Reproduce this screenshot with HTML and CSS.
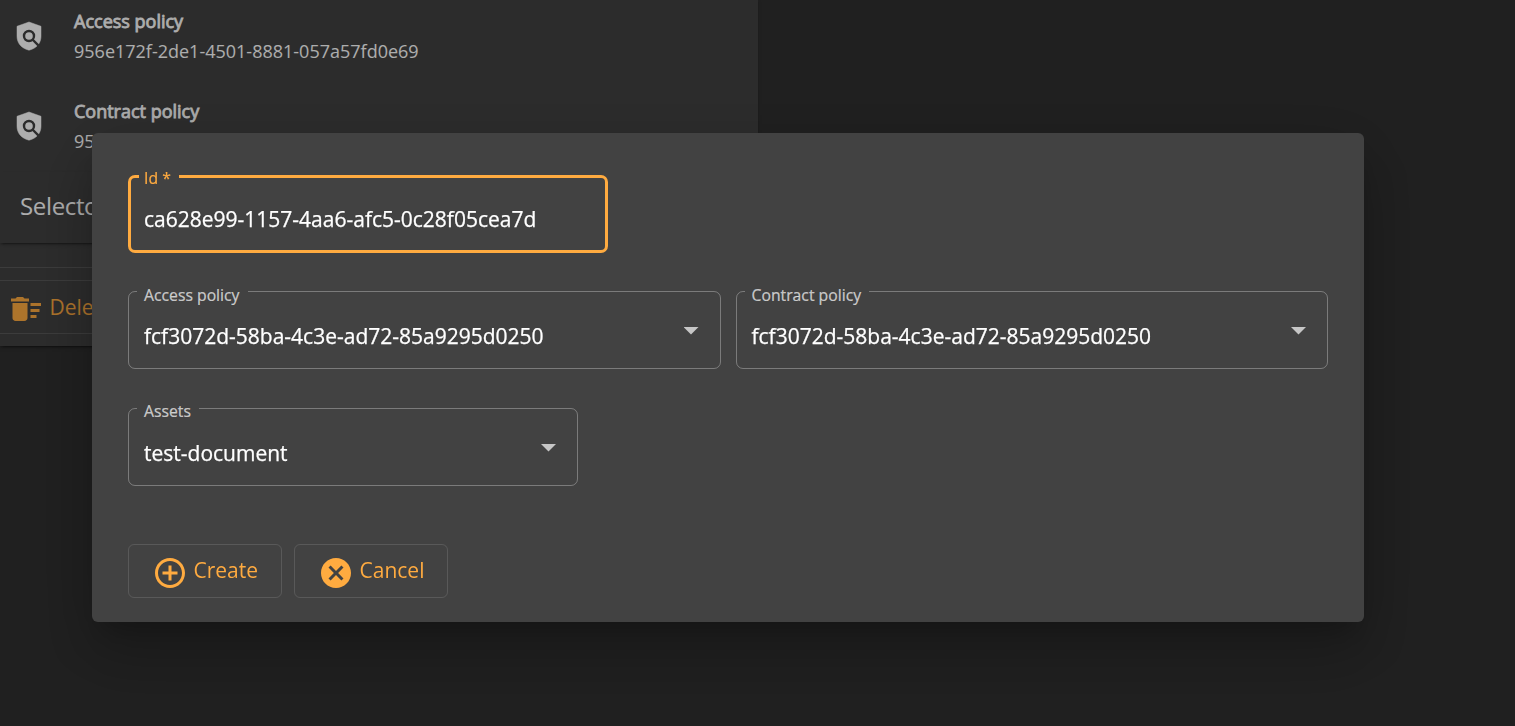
FILE: index.html
```html
<!DOCTYPE html>
<html lang="en">
<head>
<meta charset="utf-8">
<title>Create contract definition</title>
<link rel="stylesheet" href="styles.css">
</head>
<body>
<main class="page">
  <section class="card">
    <div class="item">
      <svg class="item-icon" viewBox="0 0 32 32"><path class="shield" d="M16 2L28 6.300V16C28 22.500 24.500 28 16 30.200C7.500 28 4 22.500 4 16V6.300z"/><circle class="lens" cx="16" cy="16" r="5"/><path class="lens" d="M19.500 19.500L26.300 26.300"/></svg>
      <div><div class="item-title">Access policy</div><div class="item-text">956e172f-2de1-4501-8881-057a57fd0e69</div></div>
    </div>
    <div class="item">
      <svg class="item-icon" viewBox="0 0 32 32"><path class="shield" d="M16 2L28 6.300V16C28 22.500 24.500 28 16 30.200C7.500 28 4 22.500 4 16V6.300z"/><circle class="lens" cx="16" cy="16" r="5"/><path class="lens" d="M19.500 19.500L26.300 26.300"/></svg>
      <div><div class="item-title">Contract policy</div><div class="item-text">95</div></div>
    </div>
    <div class="selector">Selecto</div>
    <div class="spacer"></div>
    <div class="delete">
      <svg class="icon" viewBox="0 0 24 24"><path d="M15 16h4v2h-4zm0-8h7v2h-7zm0 4h6v2h-6zM3 18c0 1.1.9 2 2 2h6c1.1 0 2-.9 2-2V8H3v10zM14 5h-3l-1-1H6L5 5H2v2h12z"/></svg>
      <span>Dele</span>
    </div>
  </section>
</main>
<div class="overlay">
  <form class="dialog">
    <div class="row">
      <div class="field focused"><label class="label">Id *</label><span class="value">ca628e99-1157-4aa6-afc5-0c28f05cea7d</span></div>
    </div>
    <div class="row">
      <div class="field wide"><label class="label">Access policy</label><span class="value">fcf3072d-58ba-4c3e-ad72-85a9295d0250</span><i class="arrow"></i></div>
      <div class="field wide"><label class="label">Contract policy</label><span class="value">fcf3072d-58ba-4c3e-ad72-85a9295d0250</span><i class="arrow"></i></div>
    </div>
    <div class="row">
      <div class="field assets"><label class="label">Assets</label><span class="value">test-document</span><i class="arrow"></i></div>
    </div>
    <div class="actions">
      <button class="btn" type="button"><svg class="icon" viewBox="0 0 24 24"><path d="M13 7h-2v4H7v2h4v4h2v-4h4v-2h-4V7zm-1-5C6.48 2 2 6.48 2 12s4.480 10 10 10 10-4.480 10-10S17.520 2 12 2zm0 18c-4.410 0-8-3.590-8-8s3.590-8 8-8 8 3.590 8 8-3.590 8-8 8z"/></svg><span>Create</span></button>
      <button class="btn" type="button"><svg class="icon" viewBox="0 0 24 24"><path d="M12 2C6.470 2 2 6.470 2 12s4.470 10 10 10 10-4.470 10-10S17.530 2 12 2zm5 13.590L15.590 17 12 13.410 8.410 17 7 15.590 10.590 12 7 8.410 8.410 7 12 10.590 15.590 7 17 8.410 13.410 12 17 15.590z"/></svg><span>Cancel</span></button>
    </div>
  </form>
</div>
</body>
</html>
```
FILE: styles.css
```css
* { box-sizing: border-box; }
body {
  margin: 0;
  background: #303030;
  color: #fff;
  font-family: "Open Sans", "Noto Sans", sans-serif;
}
.page { height: 726px; overflow: hidden; }
.card {
  width: 758px;
  height: 346px;
  background: #424242;
  box-shadow: 0 3px 1.5px -1.5px rgba(0,0,0,.2), 0 1.5px 1.5px rgba(0,0,0,.14), 0 1.5px 4.5px rgba(0,0,0,.12);
}
.item { display: flex; height: 90px; padding: 6px 0 0 13px; }
.item:nth-child(2) { height: 82px; }
.item-icon { width: 32px; height: 32px; margin: 14px 29px 0 0; }
.shield { fill: #fff; stroke: #fff; stroke-width: .5; stroke-linejoin: round; }
.lens { fill: none; stroke: #424242; stroke-width: 2.4; }
.item-title, .item-text { font-size: 18px; line-height: 30px; }
.item-title { -webkit-text-stroke: .8px #fff; }
.selector {
  height: 71px;
  padding-left: 20px;
  font-size: 24px;
  line-height: 67px;
  letter-spacing: -.35px;
  box-shadow: 0 3px 1.5px -1.5px rgba(0,0,0,.2), 0 1.5px 1.5px rgba(0,0,0,.14), 0 1.5px 4.5px rgba(0,0,0,.12);
}
.spacer { height: 25px; border-bottom: 1px solid rgba(255,255,255,.12); }
.delete {
  display: flex;
  align-items: center;
  height: 54px;
  margin-top: 12px;
  padding-left: 8px;
  gap: 5.5px;
  border: solid rgba(255,255,255,.12);
  border-width: 1px 0;
  color: #ffab40;
  font-size: 21px;
}
.icon { width: 36px; height: 36px; fill: #ffab40; flex: none; position: relative; top: 2px; }
.overlay {
  position: fixed;
  inset: 0;
  padding: 133px 0 0 92px;
  background: rgba(0,0,0,.32);
}
.dialog {
  width: 1272px;
  height: 489px;
  padding: 42px 36px 0;
  border-radius: 6px;
  background: #424242;
  box-shadow: 0 16.500px 22.500px -10.500px rgba(0,0,0,.2), 0 36px 57px 4.500px rgba(0,0,0,.14), 0 13.500px 69px 12px rgba(0,0,0,.12);
}
.row { display: flex; gap: 15px; margin-bottom: 39px; }
.row:first-child { margin-bottom: 38px; }
.field {
  position: relative;
  display: flex;
  justify-content: space-between;
  height: 78px;
  padding: 27px 21px 0 15px;
  border: 1px solid rgba(255,255,255,.3);
  border-radius: 7px;
}
.focused { width: 480px; padding: 24px 19px 0 13px; border: 3px solid #ffab40; }
.wide { flex: 1; }
.assets { width: 450px; }
.value { font-size: 21px; line-height: 34px; white-space: nowrap; -webkit-text-stroke: .25px #fff; }
.label {
  position: absolute;
  top: -9px;
  left: 8px;
  padding: 0 8px 0 7px;
  background: #424242;
  color: rgba(255,255,255,.7);
  font-size: 15.750px;
  line-height: 24px;
  -webkit-text-stroke: .2px;
}
.focused .label { top: -12px; left: 8px; padding-left: 5px; color: #ffab40; }
.assets .label { top: -10px; }
.arrow {
  width: 15px;
  height: 7.500px;
  margin-top: 8px;
  background: #c6c6c6;
  clip-path: polygon(0 0, 100% 0, 50% 100%);
}
.actions { display: flex; gap: 12px; margin-top: 58px; }
.btn {
  display: flex;
  align-items: center;
  width: 154px;
  height: 54px;
  padding: 0 0 0 23px;
  gap: 5.5px;
  border: 1px solid rgba(255,255,255,.12);
  border-radius: 6px;
  background: none;
  color: #ffab40;
  font: 21px/50px "Open Sans", "Noto Sans", sans-serif;
}
.btn span { position: relative; top: -1px; }
```
